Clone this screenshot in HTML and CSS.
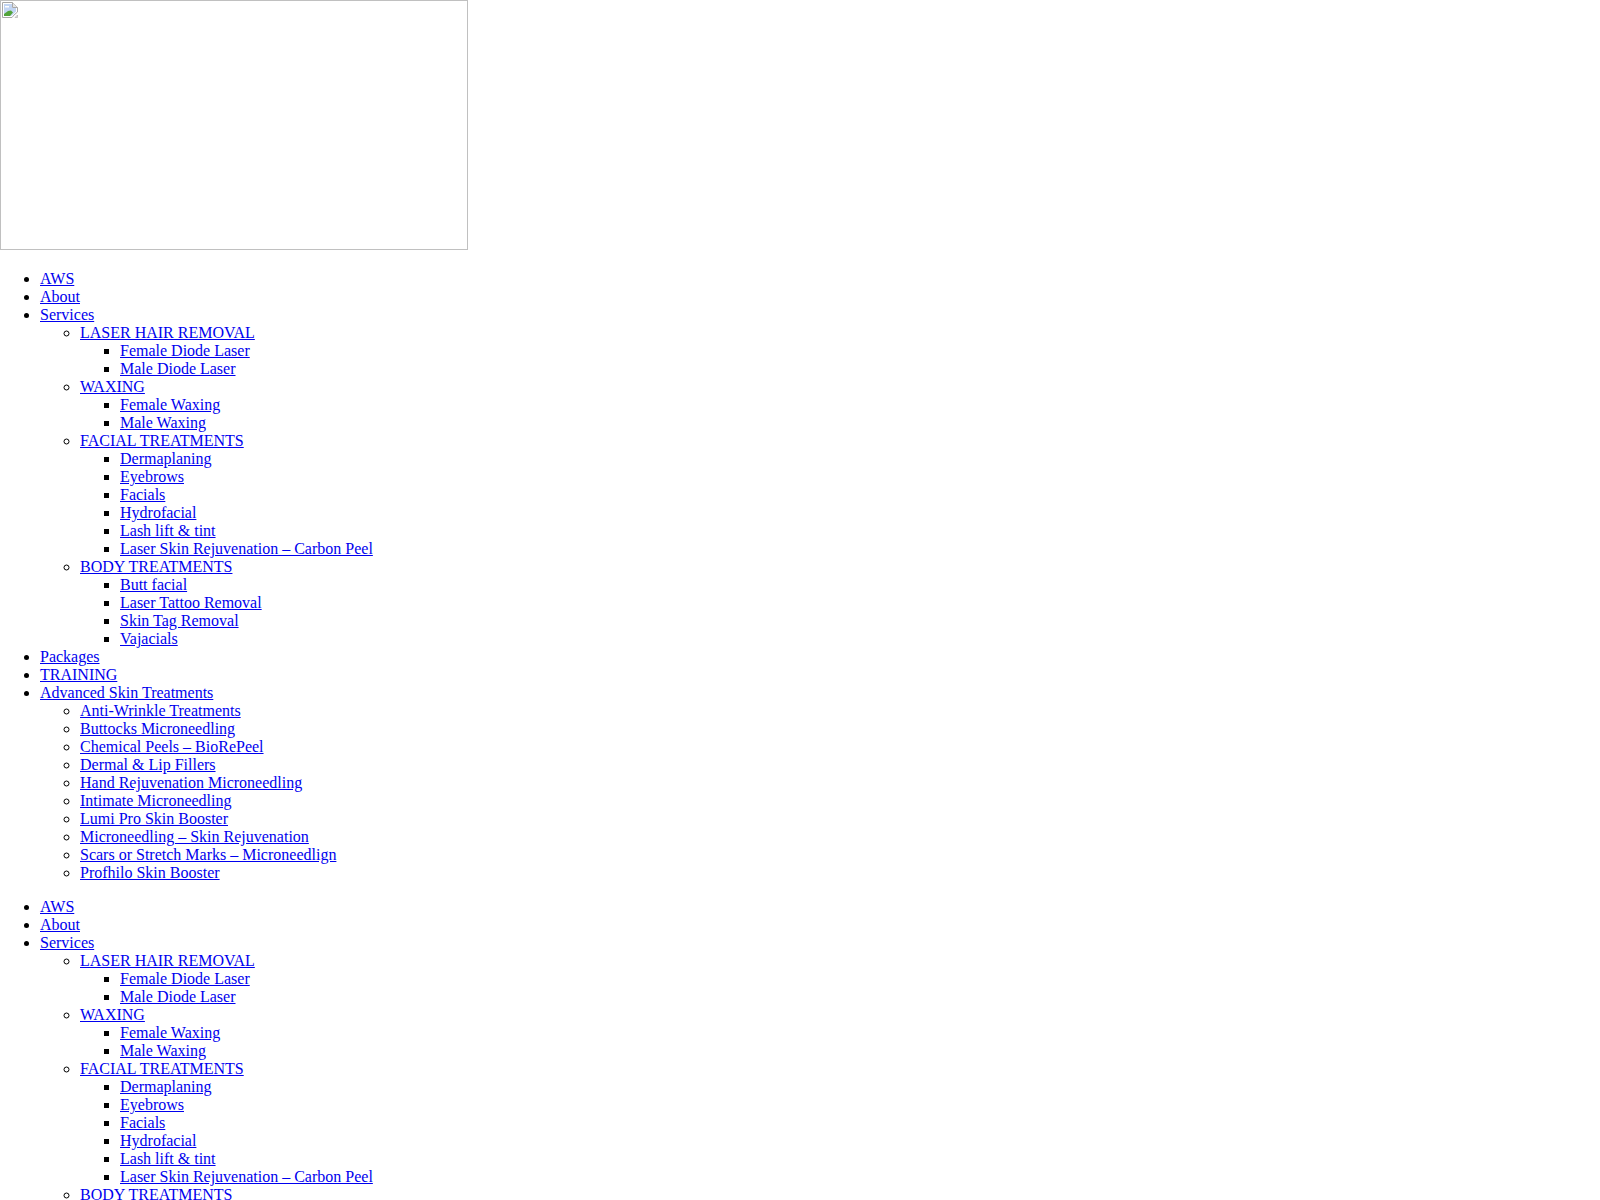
FILE: index.html
```html
<!DOCTYPE html>
<html lang="en">
<head>
    <meta charset="UTF-8">
    <title>AWS</title>
    <link rel="stylesheet" href="styles.css">
</head>
<body>
    <div class="logo-box">
        <svg class="broken-icon" width="16" height="16" viewBox="0 0 16 16">
            <path d="M0.5 0.5H10.5L15.5 5.5V10L12 13L10 15.5H0.5Z" fill="#fff" stroke="#a8a8a8"/>
            <path d="M10.5 0.5V5.5H15.5" fill="#e4e4e4" stroke="#a8a8a8"/>
            <path d="M2 2H10V6H14V9.5L11 12.5L9 14H2Z" fill="#c2d5f3"/>
            <path d="M3 4H7V5.5H3Z" fill="#fff"/>
            <path d="M2 14V12L6 9L9 8.5L11 10.5L8 14Z" fill="#52a43a"/>
            <path d="M13 15.5L15.5 13V15.5Z" fill="#e4e4e4" stroke="#a8a8a8" stroke-width="0.6"/>
        </svg>
    </div>

    <ul>
        <li><a href="#">AWS</a></li>
        <li><a href="#">About</a></li>
        <li><a href="#">Services</a>
            <ul>
                <li><a href="#">LASER HAIR REMOVAL</a>
                    <ul>
                        <li><a href="#">Female Diode Laser</a></li>
                        <li><a href="#">Male Diode Laser</a></li>
                    </ul>
                </li>
                <li><a href="#">WAXING</a>
                    <ul>
                        <li><a href="#">Female Waxing</a></li>
                        <li><a href="#">Male Waxing</a></li>
                    </ul>
                </li>
                <li><a href="#">FACIAL TREATMENTS</a>
                    <ul>
                        <li><a href="#">Dermaplaning</a></li>
                        <li><a href="#">Eyebrows</a></li>
                        <li><a href="#">Facials</a></li>
                        <li><a href="#">Hydrofacial</a></li>
                        <li><a href="#">Lash lift &amp; tint</a></li>
                        <li><a href="#">Laser Skin Rejuvenation – Carbon Peel</a></li>
                    </ul>
                </li>
                <li><a href="#">BODY TREATMENTS</a>
                    <ul>
                        <li><a href="#">Butt facial</a></li>
                        <li><a href="#">Laser Tattoo Removal</a></li>
                        <li><a href="#">Skin Tag Removal</a></li>
                        <li><a href="#">Vajacials</a></li>
                    </ul>
                </li>
            </ul>
        </li>
        <li><a href="#">Packages</a></li>
        <li><a href="#">TRAINING</a></li>
        <li><a href="#">Advanced Skin Treatments</a>
            <ul>
                <li><a href="#">Anti-Wrinkle Treatments</a></li>
                <li><a href="#">Buttocks Microneedling</a></li>
                <li><a href="#">Chemical Peels – BioRePeel</a></li>
                <li><a href="#">Dermal &amp; Lip Fillers</a></li>
                <li><a href="#">Hand Rejuvenation Microneedling</a></li>
                <li><a href="#">Intimate Microneedling</a></li>
                <li><a href="#">Lumi Pro Skin Booster</a></li>
                <li><a href="#">Microneedling – Skin Rejuvenation</a></li>
                <li><a href="#">Scars or Stretch Marks – Microneedlign</a></li>
                <li><a href="#">Profhilo Skin Booster</a></li>
            </ul>
        </li>
    </ul>

    <ul>
        <li><a href="#">AWS</a></li>
        <li><a href="#">About</a></li>
        <li><a href="#">Services</a>
            <ul>
                <li><a href="#">LASER HAIR REMOVAL</a>
                    <ul>
                        <li><a href="#">Female Diode Laser</a></li>
                        <li><a href="#">Male Diode Laser</a></li>
                    </ul>
                </li>
                <li><a href="#">WAXING</a>
                    <ul>
                        <li><a href="#">Female Waxing</a></li>
                        <li><a href="#">Male Waxing</a></li>
                    </ul>
                </li>
                <li><a href="#">FACIAL TREATMENTS</a>
                    <ul>
                        <li><a href="#">Dermaplaning</a></li>
                        <li><a href="#">Eyebrows</a></li>
                        <li><a href="#">Facials</a></li>
                        <li><a href="#">Hydrofacial</a></li>
                        <li><a href="#">Lash lift &amp; tint</a></li>
                        <li><a href="#">Laser Skin Rejuvenation – Carbon Peel</a></li>
                    </ul>
                </li>
                <li><a href="#">BODY TREATMENTS</a></li>
            </ul>
        </li>
    </ul>
</body>
</html>
```
FILE: styles.css
```css
html {
    overflow: hidden;
}

body {
    margin: 0;
    height: 1200px;
    overflow: hidden;
    font-family: "Liberation Serif", serif;
    font-size: 16px;
    background-color: #fff;
}

.logo-box {
    display: inline-block;
    width: 468px;
    height: 250px;
    box-sizing: border-box;
    border: 1px solid #c0c0c0;
    padding: 1px;
}

.broken-icon {
    display: block;
}

a {
    color: #0000ee;
}
```
